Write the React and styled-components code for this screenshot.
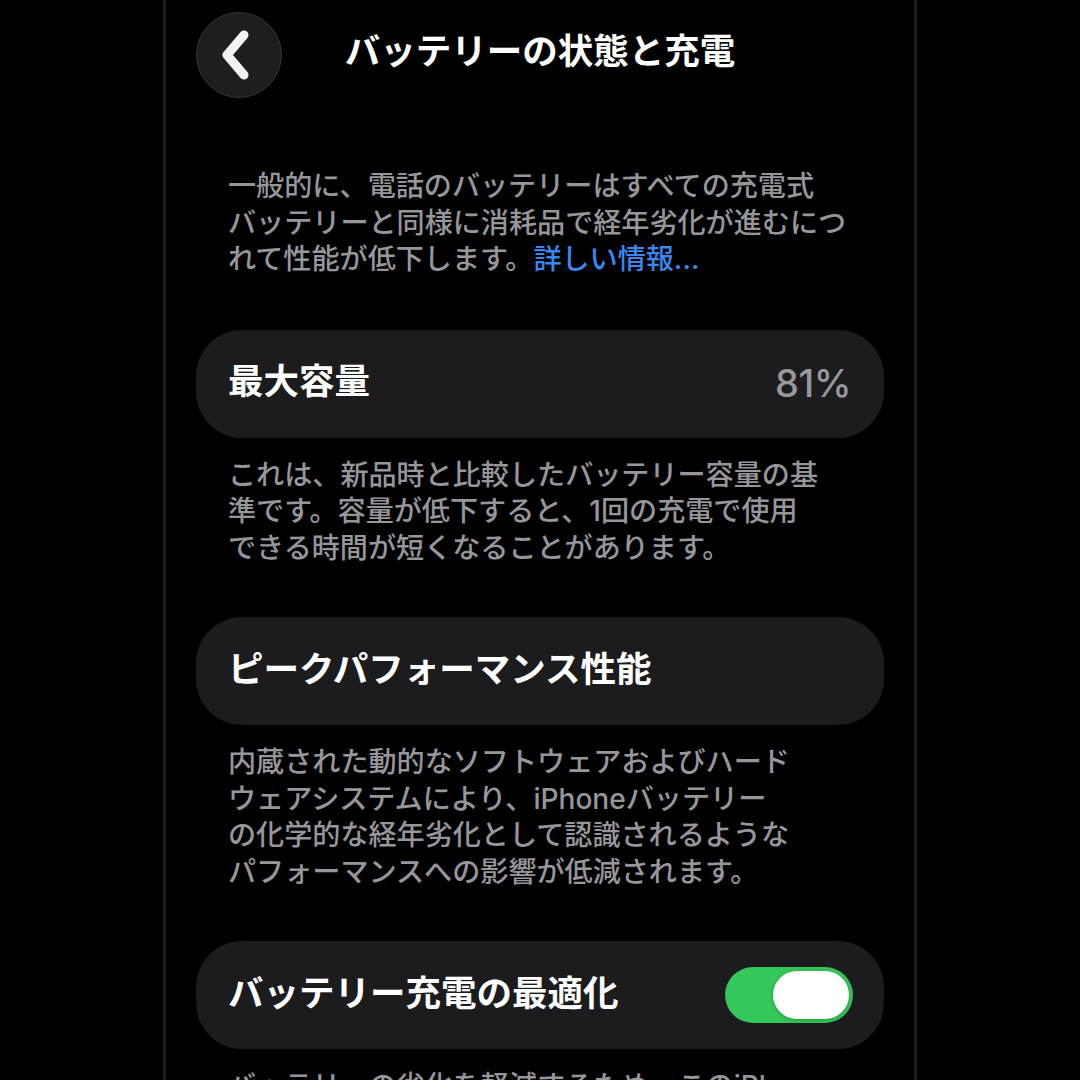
import React from "react";
import styled, { createGlobalStyle } from "styled-components";

const GlobalStyle = createGlobalStyle`
  html, body {
    margin: 0;
    padding: 0;
    background: #000;
    height: 1080px;
    overflow: hidden;
  }
  body {
    font-family: "Inter", "Noto Sans CJK JP", sans-serif;
    -webkit-font-smoothing: antialiased;
  }
`;

const Screen = styled.div`
  width: 688px;
  height: 1080px;
  margin: 0 auto;
  border-left: 3px solid #1d1d1f;
  border-right: 3px solid #1d1d1f;
  padding: 12px 30px 0;
  display: flex;
  flex-direction: column;
  overflow: hidden;
`;

const Header = styled.header`
  display: grid;
  grid-template-columns: 86px 1fr 86px;
  align-items: center;
  height: 86px;
`;

const BackButton = styled.button`
  width: 86px;
  height: 86px;
  border-radius: 50%;
  background: #1e1e20;
  border: 1.5px solid #363638;
  box-sizing: border-box;
  display: flex;
  align-items: center;
  justify-content: center;
  padding: 0 6px 0 0;
  cursor: pointer;
`;

const Title = styled.h1`
  margin: 0 0 6px;
  text-align: center;
  color: #fff;
  font-size: 35.5px;
  font-weight: 700;
  line-height: 1.2;
`;

const Note = styled.p`
  margin: ${(p) => p.$top || 19}px 0 0;
  padding: 0 32px;
  color: #96969b;
  font-size: 28.1px;
  line-height: 36.5px;
  font-weight: 500;
`;

const Link = styled.a`
  color: #3a87f0;
  font-weight: 500;
  text-decoration: none;
`;

const Card = styled.div`
  margin-top: ${(p) => p.$top || 51}px;
  height: 108px;
  flex-shrink: 0;
  border-radius: 46px;
  background: #1c1c1e;
  display: flex;
  align-items: center;
  justify-content: space-between;
  padding: 0 31px 0 32px;
`;

const Label = styled.span`
  color: #fff;
  font-size: 35.5px;
  font-weight: 700;
  line-height: 1.2;
  margin-bottom: 2px;
`;

const Value = styled.span`
  color: #98989d;
  font-size: 38px;
  font-weight: 500;
  margin-right: 2px;
  margin-bottom: 2px;
  letter-spacing: -0.5px;
`;

const Toggle = styled.div`
  width: 128px;
  height: 56px;
  border-radius: 28px;
  background: ${(p) => (p.$on ? "#34c759" : "#39393d")};
  display: flex;
  align-items: center;
  justify-content: ${(p) => (p.$on ? "flex-end" : "flex-start")};
  padding: 0 4px;
  box-sizing: border-box;
`;

const Knob = styled.div`
  width: 76px;
  height: 48px;
  border-radius: 24px;
  background: #fff;
  box-shadow: 0 1px 4px rgba(0, 0, 0, 0.25);
`;

const Chevron = () => (
  <svg width="34" height="50" viewBox="0 0 34 50" fill="none">
    <path
      d="M25 5 L8 25 L25 45"
      stroke="#f2f2f2"
      strokeWidth="9"
      strokeLinecap="round"
      strokeLinejoin="round"
    />
  </svg>
);

export default function App() {
  return (
    <>
      <GlobalStyle />
      <Screen>
        <Header>
          <BackButton aria-label="戻る">
            <Chevron />
          </BackButton>
          <Title>バッテリーの状態と充電</Title>
          <span />
        </Header>

        <Note $top={70}>
          一般的に、電話のバッテリーはすべての充電式
          <br />
          バッテリーと同様に消耗品で経年劣化が進むにつ
          <br />
          れて性能が低下します。<Link href="#">詳しい情報...</Link>
        </Note>

        <Card $top={52}>
          <Label>最大容量</Label>
          <Value>81%</Value>
        </Card>
        <Note>
          これは、新品時と比較したバッテリー容量の基
          <br />
          準です。容量が低下すると、1回の充電で使用
          <br />
          できる時間が短くなることがあります。
        </Note>

        <Card>
          <Label>ピークパフォーマンス性能</Label>
        </Card>
        <Note>
          内蔵された動的なソフトウェアおよびハード
          <br />
          ウェアシステムにより、iPhoneバッテリー
          <br />
          の化学的な経年劣化として認識されるような
          <br />
          パフォーマンスへの影響が低減されます。
        </Note>

        <Card>
          <Label>バッテリー充電の最適化</Label>
          <Toggle $on>
            <Knob />
          </Toggle>
        </Card>
        <Note>
          バッテリーの劣化を軽減するため、このiPhone
          <br />
          は日々の充電パターンを学習して、使用するまで
          <br />
          80%を超える充電を待機します。
        </Note>
      </Screen>
    </>
  );
}
